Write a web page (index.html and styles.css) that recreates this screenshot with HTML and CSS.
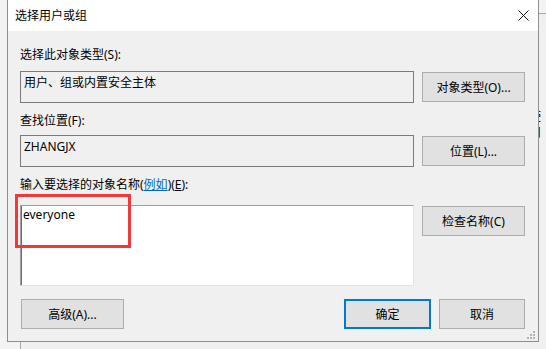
FILE: index.html
```html
<!DOCTYPE html>
<html lang="zh-CN">
<head>
    <meta charset="UTF-8">
    <title>选择用户或组</title>
    <link rel="stylesheet" href="styles.css">
</head>
<body>
    <!-- janela atrás do diálogo -->
    <div class="back-window">
        <span class="back-text">使用</span>
    </div>

    <div class="dialog">
        <div class="titlebar">
            <span class="title">选择用户或组</span>
            <svg class="close" width="11" height="11" viewBox="0 0 11 11">
                <path d="M0.5 0.5 L10.5 10.5 M10.5 0.5 L0.5 10.5" stroke="#111" stroke-width="1" fill="none"/>
            </svg>
        </div>

        <div class="content">
            <div class="label">选择此对象类型(S):</div>
            <div class="row">
                <div class="field">用户、组或内置安全主体</div>
                <button class="btn">对象类型(O)...</button>
            </div>

            <div class="label section">查找位置(F):</div>
            <div class="row">
                <div class="field">ZHANGJX</div>
                <button class="btn">位置(L)...</button>
            </div>

            <div class="label section label-names">输入要选择的对象名称(<a class="link" href="#">例如</a>)(<u>E</u>):</div>
            <div class="row">
                <div class="names-wrap">
                    <div class="names">everyone</div>
                    <div class="highlight"></div>
                </div>
                <button class="btn">检查名称(C)</button>
            </div>

            <div class="footer">
                <button class="btn btn-adv">高级(A)...</button>
                <button class="btn btn-ok">确定</button>
                <button class="btn btn-cancel">取消</button>
            </div>
        </div>

        <svg class="grip" width="8" height="8" viewBox="0 0 8 8">
            <rect x="6" y="0" width="2" height="2" fill="#b4b4b4"/>
            <rect x="3" y="3" width="2" height="2" fill="#b4b4b4"/>
            <rect x="6" y="3" width="2" height="2" fill="#b4b4b4"/>
            <rect x="0" y="6" width="2" height="2" fill="#b4b4b4"/>
            <rect x="3" y="6" width="2" height="2" fill="#b4b4b4"/>
            <rect x="6" y="6" width="2" height="2" fill="#b4b4b4"/>
        </svg>
    </div>
</body>
</html>
```

FILE: styles.css
```css
body {
    margin: 0;
    width: 546px;
    height: 349px;
    overflow: hidden;
    position: relative;
    background-color: #f3f3f3;
    font-family: 'Noto Sans', 'Noto Sans CJK SC', sans-serif;
    font-size: 12px;
    color: #000;
}
.back-window {
    position: absolute;
    left: 20px;
    top: 13px;
    right: 0;
    bottom: 0;
    overflow: hidden;
    border-top: 1px solid #a8a8a8;
    border-left: 1px solid #a8a8a8;
    background-color: #f0f0f0;
}
.back-text {
    position: absolute;
    left: 508px;
    top: 95px;
    line-height: 16px;
}
.dialog {
    position: relative;
    margin-left: 7px;
    width: 530px;
    border: 1px solid #8e8e8e;
    border-top: none;
    background-color: #f0f0f0;
}
.titlebar {
    height: 31px;
    background-color: #fff;
    display: flex;
    align-items: center;
    justify-content: space-between;
    padding: 0 9px 0 7px;
}
.title {
    line-height: 16px;
}
.close {
    display: block;
    margin-top: -1px;
}
.content {
    padding: 16px 13px 12px 12px;
}
.label {
    line-height: 16px;
    height: 16px;
    margin-bottom: 8px;
}
.label.section {
    margin-top: 10px;
    margin-bottom: 6px;
}
.label-names {
    margin-bottom: 12px !important;
}
.link {
    color: #0066cc;
    text-decoration: underline;
}
.row {
    display: flex;
    gap: 8px;
    align-items: flex-start;
}
.field {
    width: 394px;
    height: 32px;
    box-sizing: border-box;
    border: 1px solid #7a7a7a;
    background-color: #f0f0f0;
    padding: 3px 3px;
    line-height: 16px;
}
.btn {
    width: 103px;
    height: 30px;
    box-sizing: border-box;
    margin: 1px 0 0 0;
    border: 1px solid #adadad;
    background-color: #e1e1e1;
    font-family: inherit;
    font-size: 12px;
    color: #000;
    padding: 0;
}
.names-wrap {
    position: relative;
}
.names {
    width: 394px;
    height: 81px;
    box-sizing: border-box;
    border: 1px solid;
    border-color: #a0a0a0 #e3e3e3 #e3e3e3 #a0a0a0;
    box-shadow: inset 1px 0 0 #6d6d6d;
    background-color: #fff;
    padding: 1px 2px;
    line-height: 16px;
}
.highlight {
    position: absolute;
    left: -5px;
    top: -11px;
    width: 116px;
    height: 54px;
    box-sizing: border-box;
    border: 3px solid #f03a3a;
}
.footer {
    display: flex;
    margin-top: 13px;
}
.footer .btn {
    margin-top: 0;
}
.btn-adv {
    margin-left: 1px !important;
    margin-right: auto !important;
    width: 103px;
}
.btn-ok {
    width: 87px;
    border: 2px solid #0078d7;
    margin-right: 8px !important;
}
.btn-cancel {
    width: 86px;
}
.grip {
    position: absolute;
    right: 3px;
    bottom: 2px;
}
```
